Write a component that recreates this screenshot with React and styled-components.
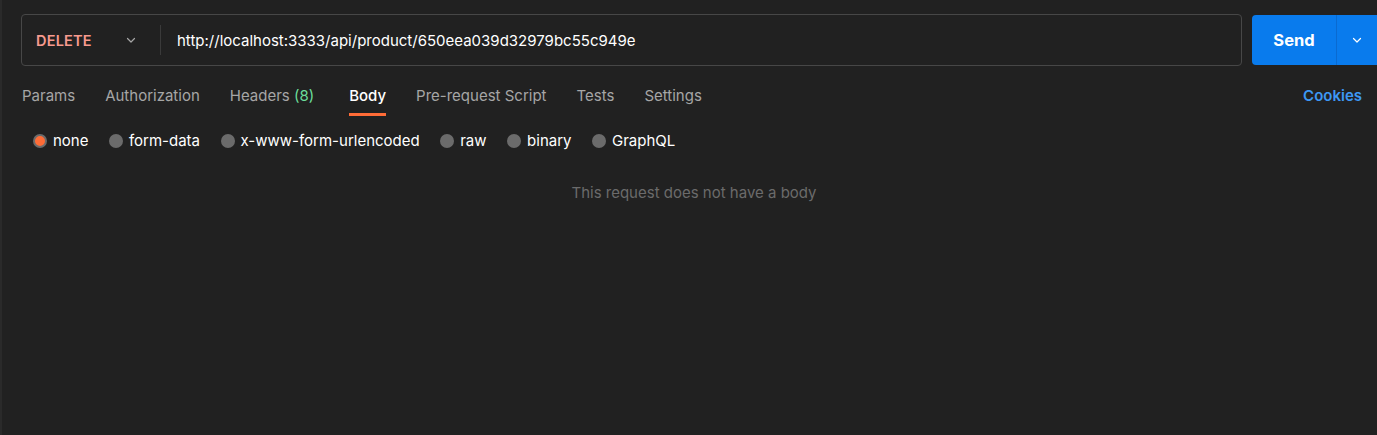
import React, { useState } from "react";
import styled, { createGlobalStyle } from "styled-components";

const GlobalStyle = createGlobalStyle`
  html, body {
    margin: 0;
    background: #212121;
    font-family: "Inter", "Liberation Sans", sans-serif;
  }
`;

const Page = styled.main`
  height: 435px;
  box-sizing: border-box;
  border-left: 2px solid #2a2a2a;
  background: #212121;
  padding: 14px 0 0 19px;
  overflow: hidden;
`;

const TopBar = styled.div`
  display: flex;
  gap: 10px;
  height: 52px;
  margin-right: -20px;
`;

const UrlBox = styled.div`
  flex: 1;
  display: flex;
  align-items: center;
  border: 1px solid #474747;
  border-radius: 4px;
  box-sizing: border-box;
`;

const Method = styled.div`
  display: flex;
  align-items: center;
  width: 138px;
  padding-left: 14px;
  box-sizing: border-box;
  color: #f79a8e;
  font-size: 14.5px;
  font-weight: 600;
  letter-spacing: 0.2px;
  span {
    flex: 1;
  }
  svg {
    margin-right: 23px;
  }
`;

const Divider = styled.div`
  width: 1px;
  height: 30px;
  background: #3a3a3a;
`;

const UrlText = styled.div`
  padding-left: 16px;
  color: #ffffff;
  font-size: 15px;
`;

const SendButton = styled.div`
  display: flex;
  height: 50px;
  margin-top: 1px;
  width: 145px;
  background: #097bed;
  border-radius: 4px;
  color: #fff;
  overflow: hidden;
`;

const SendLabel = styled.div`
  width: 84px;
  display: flex;
  align-items: center;
  justify-content: center;
  font-size: 16.5px;
  font-weight: 700;
  border-right: 1px solid #0a6ad0;
`;

const SendArrow = styled.div`
  width: 40px;
  display: flex;
  align-items: center;
  justify-content: center;
`;

const Tabs = styled.nav`
  display: flex;
  align-items: flex-start;
  height: 50px;
  padding-right: 15px;
`;

const Tab = styled.div`
  position: relative;
  box-sizing: border-box;
  height: 50px;
  padding-top: 20px;
  margin: 0 15px 0 ${(p) => (p.$first ? "1px" : "15px")};
  font-size: 15px;
  color: ${(p) => (p.$active ? "#ffffff" : "#a6a6a6")};
  font-weight: ${(p) => (p.$active ? 500 : 400)};
  &::after {
    content: "";
    display: ${(p) => (p.$active ? "block" : "none")};
    position: absolute;
    left: 0;
    right: 0;
    bottom: 0;
    height: 3px;
    background: #ff6c37;
  }
`;

const Count = styled.span`
  color: #6bdd9a;
  margin-right: 5px;
`;

const Spacer = styled.div`
  flex: 1;
`;

const Cookies = styled.div`
  padding-top: 20px;
  font-size: 15px;
  font-weight: 600;
  color: #3d98f5;
`;

const Radios = styled.div`
  display: flex;
  align-items: center;
  gap: 20.5px;
  padding: 15px 0 0 12px;
`;

const RadioItem = styled.label`
  display: flex;
  align-items: center;
  gap: 6px;
  font-size: 15px;
  color: #ffffff;
  cursor: pointer;
`;

const Dot = styled.span`
  width: 14px;
  height: 14px;
  border-radius: 50%;
  box-sizing: border-box;
  background: ${(p) => (p.$on ? "#ff6c37" : "#6b6b6b")};
  border: ${(p) => (p.$on ? "2px solid #6b6b6b" : "none")};
`;

const Empty = styled.p`
  margin: 33px 0 0;
  padding-right: 10px;
  text-align: center;
  font-size: 15px;
  color: #6b6b6b;
`;

const Chevron = ({ color = "#a6a6a6" }) => (
  <svg width="12" height="12" viewBox="0 0 12 12" fill="none">
    <path d="M2.5 4.5 6 8l3.5-3.5" stroke={color} strokeWidth="1.2" strokeLinecap="round" strokeLinejoin="round" />
  </svg>
);

const tabs = ["Params", "Authorization", "Headers", "Body", "Pre-request Script", "Tests", "Settings"];
const bodyTypes = ["none", "form-data", "x-www-form-urlencoded", "raw", "binary", "GraphQL"];

export default function App() {
  const [body, setBody] = useState("none");
  return (
    <>
      <GlobalStyle />
      <Page>
        <TopBar>
          <UrlBox>
            <Method>
              <span>DELETE</span>
              <Chevron />
            </Method>
            <Divider />
            <UrlText>http://localhost:3333/api/product/650eea039d32979bc55c949e</UrlText>
          </UrlBox>
          <SendButton>
            <SendLabel>Send</SendLabel>
            <SendArrow>
              <Chevron color="#ffffff" />
            </SendArrow>
          </SendButton>
        </TopBar>
        <Tabs>
          {tabs.map((t, i) => (
            <Tab key={t} $first={i === 0} $active={t === "Body"}>
              {t}
              {t === "Headers" && (
                <>
                  {" "}
                  <Count>(8)</Count>
                </>
              )}
            </Tab>
          ))}
          <Spacer />
          <Cookies>Cookies</Cookies>
        </Tabs>
        <Radios>
          {bodyTypes.map((b) => (
            <RadioItem key={b} onClick={() => setBody(b)}>
              <Dot $on={body === b} />
              {b}
            </RadioItem>
          ))}
        </Radios>
        <Empty>This request does not have a body</Empty>
      </Page>
    </>
  );
}
